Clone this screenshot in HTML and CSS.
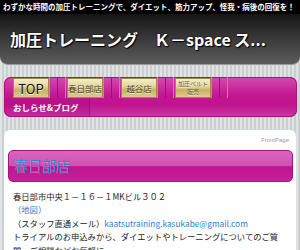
FILE: index.html
```html
<!DOCTYPE html>
<html lang="ja">
<head>
    <meta charset="UTF-8">
    <title>春日部店</title>
    <link rel="stylesheet" href="styles.css">
</head>
<body>
    <div id="topbar">わずかな時間の加圧トレーニングで、ダイエット、筋力アップ、怪我・病後の回復を！</div>
    <div id="header">
        <h1>加圧トレーニング　Ｋ－space ス...</h1>
    </div>
    <div id="nav">
        <ul id="menu">
            <li><a class="btn btn-top" href="#">TOP</a></li>
            <li><a class="btn" href="#">春日部店</a></li>
            <li><a class="btn" href="#">越谷店</a></li>
            <li><a class="btn btn-small" href="#">加圧ベルト<br>販売</a></li>
        </ul>
        <div id="sub">
            <a class="sub-item" href="#">おしらせ&amp;ブログ</a>
        </div>
    </div>
    <div id="panel">
        <div class="crumb">FrontPage</div>
        <h2 class="heading">春日部店</h2>
        <div class="content">
            <p>春日部市中央１－１６－１MKビル３０２</p>
            <p><a href="#">（地図）</a></p>
            <p>（スタッフ直通メール）<a href="#">kaatsutraining.kasukabe@gmail.com</a></p>
            <p>トライアルのお申込みから、ダイエットやトレーニングについてのご質問、ご相談などお気軽に。</p>
        </div>
    </div>
</body>
</html>
```

FILE: styles.css
```css
*{
    margin: 0;
    padding: 0;
}
ul{
    list-style: none;
}
a{
    text-decoration: none;
}
body{
    font-family: "Noto Sans CJK JP", "Noto Sans", sans-serif;
    background: repeating-linear-gradient(90deg, #e0e3e4 0 2px, #cbcfd1 2px 4px);
    width: 300px;
    height: 250px;
    overflow: hidden;
}
#topbar{
    height: 14px;
    line-height: 14px;
    background: #000;
    color: #fff;
    font-size: 7.5px;
    font-weight: bold;
    padding-left: 3px;
    white-space: nowrap;
}
#header{
    height: 50px;
    display: flex;
    align-items: center;
    padding-left: 10px;
    background: linear-gradient(#151515, #333 40%, #5c5c5c);
    border-bottom: 1px solid #9a9a9a;
    border-radius: 0 0 8px 8px;
}
#header h1{
    color: #fff;
    font-size: 16px;
    font-weight: bold;
    white-space: nowrap;
    text-shadow: 1px 1px 1px #000, 0 0 2px #000;
}
#nav{
    margin: 12px 3px 13px 4px;
    height: 40px;
    border-radius: 7px;
    background: linear-gradient(#d24cae, #c21792 45%, #bf148e 70%, #cc38a3);
    box-shadow: inset 0 0 0 1px #b0107f;
}
#menu{
    display: flex;
    padding-left: 9px;
    height: 21px;
}
#menu li{
    width: 54px;
    padding-top: 1px;
    background: linear-gradient(90deg, transparent 36px, #e06cc0 36px 37px, transparent 37px 44px, #a50c7a 44px 45px, transparent 45px 52px, #e06cc0 52px 53px, transparent 53px);
}
.btn{
    display: flex;
    align-items: center;
    justify-content: center;
    width: 34px;
    height: 18px;
    border: 1px solid #a08a48;
    background: linear-gradient(#f4edc9, #e4d69e 40%, #c7b162 62%, #dccc8c);
    color: #4a4030;
    font-size: 8.5px;
    line-height: 8px;
    text-align: center;
    text-shadow: 0 1px 0 #f6f0d4;
}
.btn-top{
    color: #111;
    font-size: 13px;
    line-height: 13px;
}
.btn-small{
    font-size: 6px;
    line-height: 8px;
    color: #6a5e48;
}
#sub{
    height: 19px;
    display: flex;
}
.sub-item{
    display: block;
    width: 76px;
    padding-left: 9px;
    line-height: 19px;
    color: #fff;
    font-size: 8.5px;
    font-weight: bold;
    background: rgba(140, 0, 100, .12);
    border-right: 1px solid rgba(120, 0, 90, .35);
    border-radius: 0 0 0 7px;
}
#panel{
    margin: 0 4px;
    height: 130px;
    background: #fff;
    border-radius: 6px 6px 0 0;
    padding: 0 3px 0 4px;
}
.crumb{
    text-align: right;
    font-size: 6px;
    line-height: 6px;
    padding: 7px 4px 0 0;
    color: #9a9a9a;
    font-family: "Liberation Sans", sans-serif;
}
.heading{
    margin-top: 7px;
    height: 30px;
    line-height: 29px;
    padding-left: 5px;
    border: 1px solid #a8107f;
    border-radius: 5px;
    background: linear-gradient(#d866bb, #d050b2 50%, #c0138f 52%, #c6209a);
    color: #1f8fd2;
    font-size: 14px;
    font-weight: normal;
    text-shadow: 0 1px 0 rgba(255, 255, 255, .25);
}
.content{
    padding: 8px 10px 0 5px;
    font-size: 8.3px;
    line-height: 13.4px;
    color: #222;
}
.content a{
    color: #2a7fd0;
}
```
